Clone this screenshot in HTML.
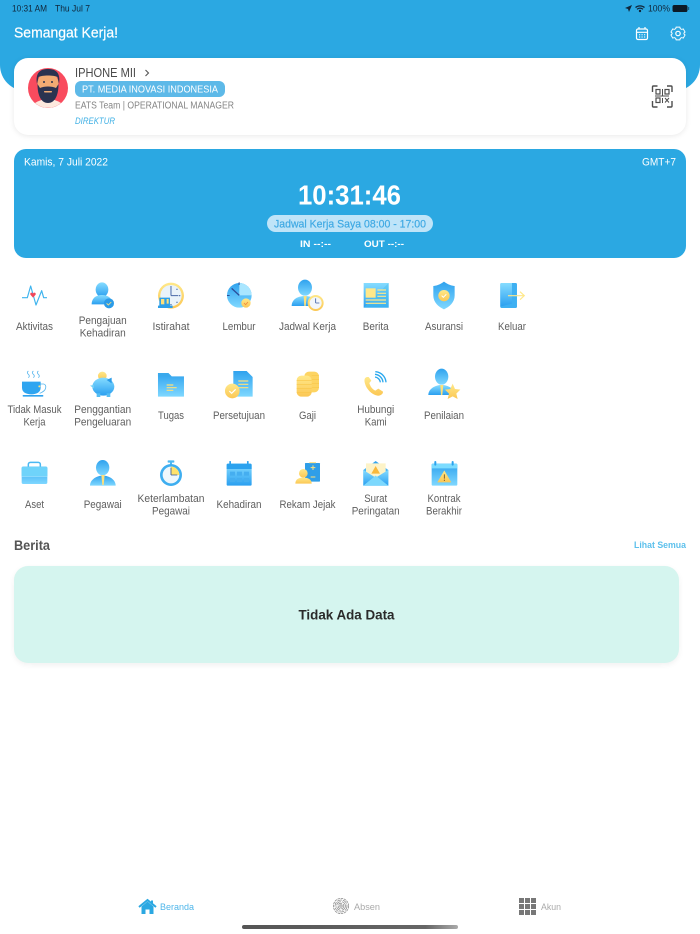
<!DOCTYPE html>
<html><head><meta charset="utf-8"><style>
html,body{margin:0;padding:0;background:#fff;width:700px;height:934px;overflow:hidden}
body{position:relative;font-family:"Liberation Sans",sans-serif}
.a{position:absolute}
svg{position:absolute;left:0;top:0}
text{font-family:"Liberation Sans",sans-serif}
.l{font-size:11px;fill:#5e5e5e;text-anchor:middle}
</style></head><body>
<div class="a" style="left:0;top:0;width:700px;height:91px;background:#2ba8e2;border-radius:0 0 26px 26px"></div>
<div class="a" style="left:14px;top:58px;width:672px;height:77px;background:#fff;border-radius:14px;box-shadow:0 1px 6px rgba(0,0,0,.09)"></div>
<div class="a" style="left:14px;top:149px;width:672px;height:109px;background:#2ba8e2;border-radius:12px"></div>
<div class="a" style="left:75px;top:81px;width:150px;height:16px;background:#5db9e8;border-radius:6px"></div>
<div class="a" style="left:267px;top:215px;width:166px;height:17px;background:#bfe4f8;border-radius:9px"></div>
<div class="a" style="left:14px;top:566px;width:665px;height:97px;background:#d5f5ef;border-radius:14px;box-shadow:0 2px 6px rgba(0,0,0,.06)"></div>
<div class="a" style="left:242px;top:925px;width:216px;height:4px;border-radius:2px;background:linear-gradient(90deg,#555,#666 85%,#aaa)"></div>

<svg width="700" height="934" viewBox="0 0 700 934">
<defs>
<linearGradient id="b" x1="0" y1="0" x2="0" y2="1"><stop offset="0" stop-color="#86dcff"/><stop offset="1" stop-color="#2a9ff0"/></linearGradient>
<linearGradient id="d" x1="0" y1="0" x2="0" y2="1"><stop offset="0" stop-color="#2fa2ee"/><stop offset="1" stop-color="#7fd8ff"/></linearGradient>
<linearGradient id="y" x1="0" y1="0" x2="0" y2="1"><stop offset="0" stop-color="#ffe889"/><stop offset="1" stop-color="#fbc754"/></linearGradient>
</defs>

<!-- status bar -->
<text x="12" y="11.5" font-size="9" fill="#10263a" lengthAdjust="spacingAndGlyphs" textLength="35">10:31 AM</text>
<text x="55" y="11.5" font-size="9" fill="#10263a" lengthAdjust="spacingAndGlyphs" textLength="35">Thu Jul 7</text>
<path d="M625 8 L632 5 L629 12 L628 9Z" fill="#10263a"/>
<path d="M635.5 7.5a7 7 0 0 1 9 0M637 9.3a4.5 4.5 0 0 1 6 0" fill="none" stroke="#10263a" stroke-width="1.3"/><circle cx="640" cy="11" r="1.2" fill="#10263a"/>
<text x="648" y="11.5" font-size="9.5" fill="#10263a" lengthAdjust="spacingAndGlyphs" textLength="22">100%</text>
<rect x="672.5" y="5" width="15" height="7" rx="1.8" fill="#0c1a26"/><rect x="688" y="7" width="1.2" height="3" fill="#1d5f85"/>

<!-- header -->
<text x="14" y="37.5" font-size="14.5" fill="#fff" stroke="#fff" stroke-width=".2" lengthAdjust="spacingAndGlyphs" textLength="104">Semangat Kerja!</text>
<g fill="none" stroke="#fff" stroke-width="1.2">
<rect x="636.5" y="29" width="11" height="10.5" rx="1.5"/><path d="M636.5 32.3h11M639 27v2.5M645 27v2.5"/>
<path d="M639 34.8h1.2M641.5 34.8h1.2M644 34.8h1.2M639 37h1.2M641.5 37h1.2M644 37h1.2" stroke-width="1"/>
<path d="M675.7 27.5h4.6l.6 2 1.7.9 2-.6 2.2 3.9-1.4 1.3v1l1.4 1.3-2.2 3.9-2-.6-1.7.9-.6 2h-4.6l-.6-2-1.7-.9-2 .6-2.200-3.900 1.400-1.300v-1l-1.400-1.300 2.200-3.900 2 .6 1.700-.9z" transform="translate(135.6 5.1) scale(.8)"/>
<circle cx="678" cy="33.5" r="2.2"/>
</g>

<!-- avatar -->
<circle cx="48" cy="88" r="20" fill="#f94b5e"/>
<path d="M35 103 q13 -8 26 0 a20 20 0 0 1 -26 0z" fill="#fde9de"/>
<ellipse cx="48" cy="84" rx="10.500" ry="12" fill="#f2ab73"/>
<path d="M37 84 C35 72 41 69 48 69 C55 69 61 72 59 84 L57.500 77 C54 75 42 75 38.500 77Z" fill="#2b3350"/>
<path d="M37.500 84 C37.500 97 42 103 48 103 C54 103 58.500 97 58.500 84 L56 88 C52 86 44 86 40 88Z" fill="#2b3350"/>
<rect x="44" y="91" width="8" height="1.500" rx=".7" fill="#f2ab73"/>
<circle cx="44" cy="82" r="1" fill="#2b3350"/><circle cx="52" cy="82" r="1" fill="#2b3350"/>

<!-- profile -->
<text x="75" y="77" font-size="12.5" fill="#4a4a4a" lengthAdjust="spacingAndGlyphs" textLength="61">IPHONE MII</text>
<path d="M145.500 70l3 3-3 3" fill="none" stroke="#555" stroke-width="1.100"/>
<text x="82" y="92.300" font-size="10.500" fill="#fff" lengthAdjust="spacingAndGlyphs" textLength="136">PT. MEDIA INOVASI INDONESIA</text>
<text x="75" y="108.300" font-size="10" fill="#858585" lengthAdjust="spacingAndGlyphs" textLength="159">EATS Team | OPERATIONAL MANAGER</text>
<text x="75" y="124" font-size="9.500" font-style="italic" fill="#3fb0e5" lengthAdjust="spacingAndGlyphs" textLength="40">DIREKTUR</text>

<!-- QR -->
<g fill="none" stroke="#4e4e4e" stroke-width="1.400">
<path d="M652.500 92v-5q0-1 1-1h4M667 86h4q1 0 1 1v5M672 101v5q0 1-1 1h-4M657.500 107h-4q-1 0-1-1v-5"/>
<g stroke-width="1.200"><rect x="656" y="89.500" width="4" height="4.500"/><rect x="665" y="89.500" width="4" height="4.500"/><rect x="656" y="98" width="4" height="4.500"/></g>
<path d="M662.500 89v7M655 96h14M665 98l4 4.500M669 98l-4 4.500M662.500 98v5" stroke-width="1"/>
</g>

<!-- clock card -->
<text x="24" y="165.600" font-size="11" fill="#fff" lengthAdjust="spacingAndGlyphs" textLength="84">Kamis, 7 Juli 2022</text>
<text x="642" y="165.600" font-size="11" fill="#fff" lengthAdjust="spacingAndGlyphs" textLength="34">GMT+7</text>
<text x="349.500" y="204.500" font-size="27.500" font-weight="bold" fill="#fff" text-anchor="middle" lengthAdjust="spacingAndGlyphs" textLength="103">10:31:46</text>
<text x="350" y="227.400" font-size="11" fill="#3fa9e3" stroke="#3fa9e3" stroke-width=".2" text-anchor="middle" lengthAdjust="spacingAndGlyphs" textLength="152">Jadwal Kerja Saya 08:00 - 17:00</text>
<text x="300" y="247" font-size="9.500" font-weight="bold" fill="#fff" lengthAdjust="spacingAndGlyphs" textLength="31">IN --:--</text>
<text x="364" y="247" font-size="9.500" font-weight="bold" fill="#fff" lengthAdjust="spacingAndGlyphs" textLength="40">OUT --:--</text>

<g transform="translate(0 .6)" lengthAdjust="spacingAndGlyphs">
<!-- row 1 labels -->
<text class="l" x="34.500" y="329.500" lengthAdjust="spacingAndGlyphs" textLength="37">Aktivitas</text>
<text class="l" x="102.700" y="323.500" lengthAdjust="spacingAndGlyphs" textLength="48">Pengajuan</text>
<text class="l" x="102.700" y="336" lengthAdjust="spacingAndGlyphs" textLength="46">Kehadiran</text>
<text class="l" x="171" y="329.500" lengthAdjust="spacingAndGlyphs" textLength="37">Istirahat</text>
<text class="l" x="239" y="329.500" lengthAdjust="spacingAndGlyphs" textLength="33">Lembur</text>
<text class="l" x="307.500" y="329.500" lengthAdjust="spacingAndGlyphs" textLength="57">Jadwal Kerja</text>
<text class="l" x="375.700" y="329.500" lengthAdjust="spacingAndGlyphs" textLength="26">Berita</text>
<text class="l" x="444" y="329.500" lengthAdjust="spacingAndGlyphs" textLength="38">Asuransi</text>
<text class="l" x="512" y="329.500" lengthAdjust="spacingAndGlyphs" textLength="28">Keluar</text>
<!-- row 2 labels -->
<text class="l" x="34.500" y="412.500" lengthAdjust="spacingAndGlyphs" textLength="54">Tidak Masuk</text>
<text class="l" x="34.500" y="425" lengthAdjust="spacingAndGlyphs" textLength="22">Kerja</text>
<text class="l" x="102.700" y="412.500" lengthAdjust="spacingAndGlyphs" textLength="57">Penggantian</text>
<text class="l" x="102.700" y="425" lengthAdjust="spacingAndGlyphs" textLength="57">Pengeluaran</text>
<text class="l" x="171" y="418.500" lengthAdjust="spacingAndGlyphs" textLength="26">Tugas</text>
<text class="l" x="239" y="418.500" lengthAdjust="spacingAndGlyphs" textLength="52">Persetujuan</text>
<text class="l" x="307.500" y="418.500" lengthAdjust="spacingAndGlyphs" textLength="17">Gaji</text>
<text class="l" x="375.700" y="412.500" lengthAdjust="spacingAndGlyphs" textLength="37">Hubungi</text>
<text class="l" x="375.700" y="425" lengthAdjust="spacingAndGlyphs" textLength="22">Kami</text>
<text class="l" x="444" y="418.500" lengthAdjust="spacingAndGlyphs" textLength="40">Penilaian</text>
<!-- row 3 labels -->
<text class="l" x="34.500" y="507.500" lengthAdjust="spacingAndGlyphs" textLength="19">Aset</text>
<text class="l" x="102.700" y="507.500" lengthAdjust="spacingAndGlyphs" textLength="38">Pegawai</text>
<text class="l" x="171" y="501.500" lengthAdjust="spacingAndGlyphs" textLength="67">Keterlambatan</text>
<text class="l" x="171" y="514" lengthAdjust="spacingAndGlyphs" textLength="38">Pegawai</text>
<text class="l" x="239" y="507.500" lengthAdjust="spacingAndGlyphs" textLength="45">Kehadiran</text>
<text class="l" x="307.500" y="507.500" lengthAdjust="spacingAndGlyphs" textLength="56">Rekam Jejak</text>
<text class="l" x="375.700" y="501.500" lengthAdjust="spacingAndGlyphs" textLength="23">Surat</text>
<text class="l" x="375.700" y="514" lengthAdjust="spacingAndGlyphs" textLength="48">Peringatan</text>
<text class="l" x="444" y="501.500" lengthAdjust="spacingAndGlyphs" textLength="33">Kontrak</text>
<text class="l" x="444" y="514" lengthAdjust="spacingAndGlyphs" textLength="36">Berakhir</text>
</g>

<!-- ROW 1 LEFT -->
<g transform="translate(0 275) scale(.3333)">
<polyline points="66,68 82,68 92,33 108,90 125,47 131,68 141,68" fill="none" stroke="#3fb4ee" stroke-width="3.500" stroke-linejoin="round"/>
<path d="M99 68 L91 59 Q90 53 95 53 Q98 53 99 56 Q100 53 103 53 Q108 53 107 59Z" fill="#f0465a"/>
<ellipse cx="306" cy="44" rx="19" ry="22" fill="url(#b)"/>
<path d="M275 88 C275 68 290 60 306 60 C325 60 337 70 337 88Z" fill="url(#b)"/>
<circle cx="327" cy="85" r="15" fill="#2a9be8"/><path d="M320 85l5 5 9-9" fill="none" stroke="#ffe07a" stroke-width="2.500"/>
<circle cx="513" cy="62" r="39" fill="url(#y)"/><circle cx="513" cy="62" r="32" fill="#eaf3fa"/>
<path d="M513 62V33M513 62H535" stroke="#4a6aa8" stroke-width="3"/>
<g fill="#4a6aa8"><circle cx="539" cy="62" r="2"/><circle cx="531" cy="43" r="2"/><circle cx="531" cy="82" r="2"/><circle cx="513" cy="89" r="2"/></g>
<path d="M478 68H510V92H518V99H474V92H478Z" fill="#2e9fe8"/><rect x="483" y="72" width="10" height="16" fill="#ffe07a"/><rect x="500" y="72" width="6" height="14" fill="#ffe07a"/>
<circle cx="718" cy="61" r="37" fill="url(#d)"/>
<path d="M718 61V24A37 37 0 0 1 755 61Z" fill="#a9e6ff"/>
<path d="M718 61L695 40" stroke="#2b4f9a" stroke-width="4"/>
<g fill="#2b4f9a"><rect x="716" y="22" width="3" height="8"/><rect x="681" y="60" width="8" height="3"/></g>
<circle cx="738" cy="84" r="14" fill="url(#y)"/><path d="M732 84l5 5 7-8" fill="none" stroke="#f08a3c" stroke-width="2.500"/>
</g>

<!-- ROW 1 RIGHT -->
<g transform="translate(270 275) scale(.3333)">
<ellipse cx="105" cy="38" rx="21" ry="24" fill="url(#d)"/>
<path d="M65 93 C65 72 85 63 105 63 C125 63 145 72 145 93Z" fill="url(#b)"/>
<path d="M101 63H110L107 93H103Z" fill="#ffe07a"/>
<circle cx="137" cy="84" r="24" fill="url(#y)"/><circle cx="137" cy="84" r="18" fill="#f2f6fb"/>
<path d="M137 84V70M137 84H148" stroke="#3c5ea5" stroke-width="2.500"/>
<rect x="281" y="24" width="75" height="74" fill="url(#b)"/><path d="M356 24V98H281Z" fill="#4cc2f0" opacity=".5"/>
<rect x="287" y="40" width="30" height="28" fill="#ffe889"/>
<path d="M322 45H348M322 55H348M322 64H348M287 75H348M287 85H348" stroke="#ffe889" stroke-width="3.500"/>
<path d="M522 20C535 30 545 32 554 33V62C554 82 538 96 522 103C506 96 490 82 490 62V33C499 32 509 30 522 20Z" fill="url(#d)"/>
<circle cx="522" cy="62" r="17" fill="url(#y)"/><path d="M515 62l5 5 9-9" fill="none" stroke="#fff" stroke-width="3"/>
<rect x="691" y="24" width="50" height="75" rx="4" fill="#3eb0f2"/><path d="M691 28q0-4 4-4h31v62l-35 9z" fill="url(#b)"/>
<path d="M714 62H762M750 50L763 62L750 74" fill="none" stroke="#ffe889" stroke-width="3.500"/>
</g>

<!-- ROW 2 LEFT -->
<g transform="translate(0 365) scale(.3333)">
<g fill="none" stroke="#5ab8ee" stroke-width="2.500"><path d="M85 18q-6 5 0 10t0 10M100 18q-6 5 0 10t0 10M115 18q-6 5 0 10t0 10"/><path d="M121 57h10q8 2 6 12t-18 16"/></g>
<path d="M66 50H122V68C122 82 110 88 94 88C78 88 66 82 66 68Z" fill="#2fa5f0"/><rect x="68" y="90" width="62" height="5" rx="2" fill="#2fa2ee"/>
<circle cx="118" cy="64" r="3" fill="#ffe07a"/>
<circle cx="307" cy="33" r="13" fill="url(#y)"/>
<ellipse cx="310" cy="65" rx="33" ry="27" fill="url(#b)"/>
<path d="M320 45L335 38V55Z" fill="#2a9be8"/><path d="M282 60L270 62L282 70Z" fill="#6fcff7"/>
<rect x="290" y="85" width="11" height="11" fill="#55bdf3"/><rect x="320" y="85" width="11" height="11" fill="#55bdf3"/>
<path d="M474 24H505L515 34H552V95H474Z" fill="url(#d)"/>
<path d="M474 24H505L515 34H474Z" fill="#3aa9ec"/>
<path d="M500 60H520M500 68H530M500 76H520" stroke="#ffe07a" stroke-width="3.500"/>
<path d="M700 18H740L758 36V95H700Z" fill="url(#d)"/>
<path d="M715 48H745M715 58H745M715 68H745" stroke="#ffe07a" stroke-width="3.500"/>
<circle cx="697" cy="78" r="22" fill="url(#y)"/><path d="M688 78l7 7 12-12" fill="none" stroke="#fff" stroke-width="3.500"/>
</g>

<!-- ROW 2 RIGHT -->
<g transform="translate(270 365) scale(.3333)">
<rect x="103" y="20" width="44" height="62" rx="14" fill="#fdd462"/>
<path d="M125 32H147M125 44H147M125 56H147M125 68H147" stroke="#f9c648" stroke-width="2"/>
<rect x="80" y="32" width="45" height="63" rx="14" fill="url(#y)"/>
<path d="M80 46H125M80 58H125M80 70H125M80 82H125" stroke="#f9c648" stroke-width="2"/>
<path d="M291 36C283 38 282 46 285 56C290 73 304 88 322 92C332 93 340 86 339 80L325 71L316 77C306 72 301 64 298 54L304 47L296 36Z" fill="url(#y)"/>
<g fill="none" stroke="#2ba8ee" stroke-width="4"><path d="M315 36a18 18 0 0 1 16 16M315 28a26 26 0 0 1 24 24M316 20a34 34 0 0 1 32 32"/></g>
<ellipse cx="515" cy="35" rx="20" ry="24" fill="url(#d)"/>
<path d="M475 90C475 72 495 60 515 60C535 60 555 72 555 90Z" fill="url(#b)"/>
<path d="M511 60H520L517 90H513Z" fill="#ffe07a"/>
<path d="M548 56L555 72L571 74L559 86L563 102L548 94L533 102L537 86L525 74L541 72Z" fill="url(#y)"/>
</g>

<!-- ROW 3 LEFT -->
<g transform="translate(0 455) scale(.3333)">
<rect x="85" y="22" width="36" height="20" rx="6" fill="none" stroke="#4bb8f2" stroke-width="4.500"/>
<rect x="65" y="35" width="77" height="52" rx="5" fill="url(#d)"/>
<path d="M65 40q0-5 5-5h67q5 0 5 5v24H65Z" fill="#6fd3fa"/><path d="M65 64H142" stroke="#a6e8ff" stroke-width="2"/>
<ellipse cx="308" cy="38" rx="20" ry="23" fill="url(#d)"/>
<path d="M270 92C270 74 290 62 308 62C328 62 347 74 347 92Z" fill="url(#d)"/>
<path d="M304 60H314L311 90H307Z" fill="#ffe07a"/>
<rect x="503" y="16" width="20" height="7" rx="2" fill="#4bb8f2"/><rect x="510" y="22" width="6" height="7" fill="#4bb8f2"/>
<circle cx="513" cy="60" r="33" fill="#3eaef0"/><circle cx="513" cy="60" r="25" fill="#eef7fc"/>
<path d="M513 60V35A25 25 0 0 1 538 60Z" fill="#ffe26a"/>
<path d="M513 60V38M513 60H532" stroke="#33559c" stroke-width="2.500"/>
<rect x="680" y="26" width="75" height="66" rx="4" fill="url(#b)"/><path d="M680 30q0-4 4-4h67q4 0 4 4v12H680Z" fill="#2ba2ee"/>
<rect x="688" y="18" width="5" height="14" rx="2" fill="#2ba2ee"/><rect x="741" y="18" width="5" height="14" rx="2" fill="#2ba2ee"/>
<g fill="#45aef0"><rect x="690" y="50" width="15" height="12"/><rect x="711" y="50" width="15" height="12"/><rect x="732" y="50" width="15" height="12"/><rect x="690" y="69" width="15" height="12"/><rect x="711" y="69" width="15" height="12"/><rect x="732" y="69" width="15" height="12"/></g>
</g>

<!-- ROW 3 RIGHT -->
<g transform="translate(270 455) scale(.3333)">
<rect x="105" y="24" width="45" height="56" rx="2" fill="#2f9ee8"/>
<path d="M118 23H138" stroke="#ffe07a" stroke-width="3"/>
<path d="M122 38H136M129 31V45M122 66H136" stroke="#ffe07a" stroke-width="3"/>
<circle cx="100" cy="55" r="13" fill="url(#y)"/>
<path d="M76 86C76 72 88 68 100 68C112 68 125 72 125 86Z" fill="url(#y)"/>
<path d="M280 45L317 18L355 45V92H280Z" fill="url(#d)"/>
<path d="M288 25H347V60L317 72L288 60Z" fill="#fdf3c8"/>
<path d="M317 33L330 56H304Z" fill="#f9b93c"/>
<path d="M280 45L317 68L355 45V92H280Z" fill="url(#b)"/>
<path d="M280 92L317 62L355 92Z" fill="#7cd8fd"/>
<rect x="485" y="26" width="77" height="66" rx="4" fill="url(#d)"/><path d="M485 30q0-4 4-4h69q4 0 4 4v10H485Z" fill="#7cdcff"/>
<rect x="493" y="18" width="6" height="14" rx="3" fill="#2ba2ee"/><rect x="545" y="18" width="6" height="14" rx="3" fill="#2ba2ee"/>
<path d="M523 46L544 82H502Z" fill="url(#y)"/><path d="M523 58V71M523 74V78" stroke="#6b4a1a" stroke-width="2.500"/>
</g>

<!-- Berita -->
<text x="14" y="550" font-size="13.500" font-weight="bold" fill="#555" lengthAdjust="spacingAndGlyphs" textLength="36">Berita</text>
<text x="634" y="548" font-size="9.500" font-weight="bold" fill="#5cc0ec" lengthAdjust="spacingAndGlyphs" textLength="52">Lihat Semua</text>
<text x="346.500" y="619.500" font-size="14" font-weight="bold" fill="#2a2a2a" text-anchor="middle" lengthAdjust="spacingAndGlyphs" textLength="96">Tidak Ada Data</text>

<!-- nav -->
<path d="M139 907L147.500 900L156 907" fill="none" stroke="#2ba8e2" stroke-width="2"/>
<path d="M141.500 906.500L147.500 901.500L153.500 906.500V914H149.500V909.500H145.500V914H141.500Z" fill="#2ba8e2"/>
<rect x="151" y="900.500" width="2" height="4" fill="#2ba8e2"/>
<text x="160" y="910.200" font-size="9.500" fill="#4fb6ea" lengthAdjust="spacingAndGlyphs" textLength="34">Beranda</text>
<g fill="none" stroke="#8e8e8e" stroke-width=".8">
<circle cx="341" cy="906" r="7.600" stroke-dasharray="2.500 .7"/>
<circle cx="341" cy="906" r="6" stroke-dasharray="5 1"/>
<circle cx="341" cy="906" r="4.400" stroke-dasharray="6 1.200"/>
<circle cx="341" cy="906" r="2.800" stroke-dasharray="4 1"/>
<circle cx="341" cy="906" r="1.200"/>
</g>
<text x="354" y="910.200" font-size="9.500" fill="#aaa" lengthAdjust="spacingAndGlyphs" textLength="26">Absen</text>
<g fill="#777"><rect x="519" y="898" width="5" height="5"/><rect x="525" y="898" width="5" height="5"/><rect x="531" y="898" width="5" height="5"/><rect x="519" y="904" width="5" height="5"/><rect x="525" y="904" width="5" height="5"/><rect x="531" y="904" width="5" height="5"/><rect x="519" y="910" width="5" height="5"/><rect x="525" y="910" width="5" height="5"/><rect x="531" y="910" width="5" height="5"/></g>
<text x="541" y="910.200" font-size="9.500" fill="#aaa" lengthAdjust="spacingAndGlyphs" textLength="20">Akun</text>
</svg>
</body></html>
